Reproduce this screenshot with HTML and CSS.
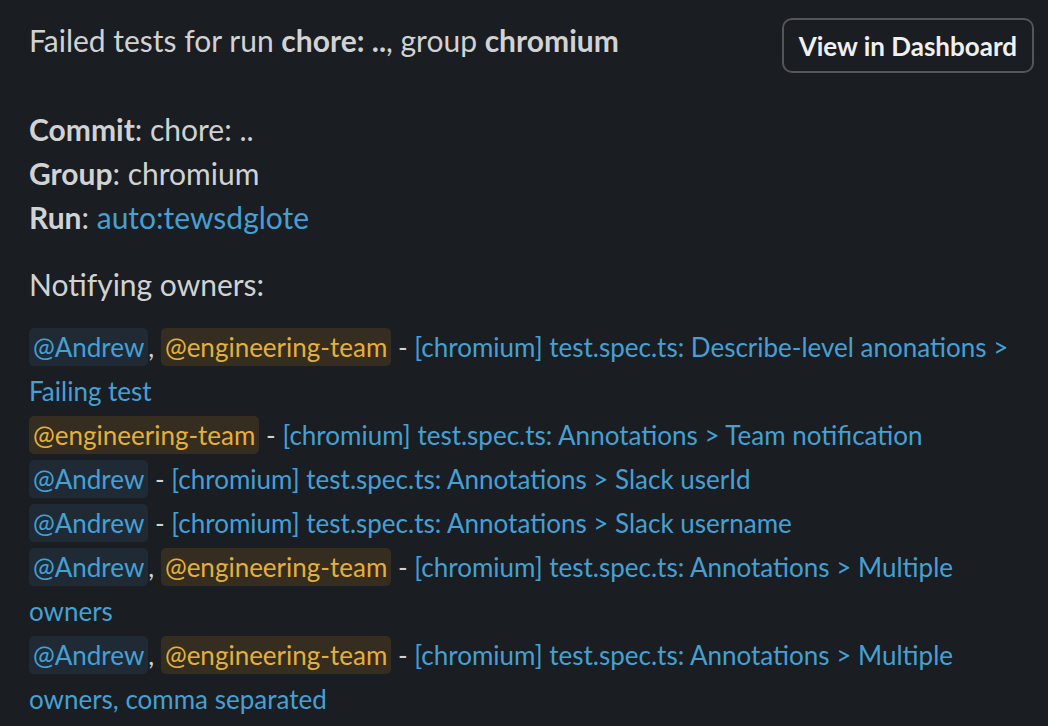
FILE: index.html
```html
<!DOCTYPE html>
<html>
<head>
<meta charset="utf-8">
<link rel="stylesheet" href="styles.css">
</head>
<body>
<div class="msg">
  <div class="header">
    <div class="title">Failed tests for run <b>chore: ..</b>, group <b>chromium</b></div>
    <button class="btn">View in Dashboard</button>
  </div>
  <div class="meta">
    <div><b>Commit</b>: chore: ..</div>
    <div><b>Group</b>: chromium</div>
    <div><b>Run</b>: <a class="link">auto:tewsdglote</a></div>
  </div>
  <div class="notify">Notifying owners:</div>
  <div class="list">
    <div class="row"><span class="m user">@Andrew</span>, <span class="m team">@engineering-team</span> - <a class="link">[chromium] test.spec.ts: Describe-level anonations &gt; Failing test</a></div>
    <div class="row"><span class="m team">@engineering-team</span> - <a class="link">[chromium] test.spec.ts: Annotations &gt; Team notification</a></div>
    <div class="row"><span class="m user">@Andrew</span> - <a class="link">[chromium] test.spec.ts: Annotations &gt; Slack userId</a></div>
    <div class="row"><span class="m user">@Andrew</span> - <a class="link">[chromium] test.spec.ts: Annotations &gt; Slack username</a></div>
    <div class="row"><span class="m user">@Andrew</span>, <span class="m team">@engineering-team</span> - <a class="link">[chromium] test.spec.ts: Annotations &gt; Multiple owners</a></div>
    <div class="row"><span class="m user">@Andrew</span>, <span class="m team">@engineering-team</span> - <a class="link">[chromium] test.spec.ts: Annotations &gt; Multiple owners, comma separated</a></div>
  </div>
</div>
</body>
</html>
```
FILE: styles.css
```css
html, body {
  margin: 0;
  padding: 0;
  background: #1a1d21;
}
body {
  font-family: Lato, "Noto Sans", sans-serif;
  font-size: 26px;
  line-height: 44px;
  color: #d1d2d3;
}
.msg {
  padding: 18px 14px 0 29px;
}
.header {
  display: flex;
  justify-content: space-between;
  align-items: flex-start;
  gap: 20px;
}
.title, .meta, .notify {
  font-size: 30px;
}
.title b, .meta b {
  font-weight: 700;
}
.btn {
  height: 55px;
  padding: 0 15px;
  border: 2px solid #54565a;
  border-radius: 10px;
  background: #1a1d21;
  color: #f0f0f0;
  font-family: Lato, sans-serif;
  font-weight: 700;
  font-size: 26px;
  line-height: 1;
}
.meta {
  margin-top: 34px;
}
.notify {
  margin-top: 23px;
}
.list {
  margin-top: 19px;
}
.link {
  color: #45a0d5;
  text-decoration: none;
}
.m {
  padding: 3px 4px;
  border-radius: 5px;
}
.user {
  color: #45a0d5;
  background: #1f2a35;
}
.team {
  color: #e4b03c;
  background: #342d20;
}
```
